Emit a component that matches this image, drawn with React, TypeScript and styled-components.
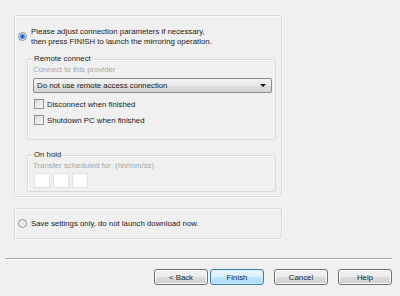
import styled, { createGlobalStyle } from "styled-components";

const GlobalStyle = createGlobalStyle`
  html, body {
    margin: 0;
    padding: 0;
    background: #f0f0f0;
  }
  body {
    font-family: "Liberation Sans", Arial, sans-serif;
    font-size: 7.8px;
    color: #1a1a1a;
  }
`;

const Page = styled.div`
  width: 400px;
  height: 296px;
  box-sizing: border-box;
  padding-top: 15px;
  display: flex;
  flex-direction: column;
  background: #f0f0f0;
`;

const Panel = styled.div<{ $height: number }>`
  margin-left: 14px;
  width: 268px;
  height: ${(p) => p.$height}px;
  box-sizing: border-box;
  border: 1px solid #d9d9d9;
  border-radius: 2px;
  box-shadow: inset 1px 1px 0 #fbfbfb, 1px 1px 0 #fbfbfb;
  display: flex;
  flex-direction: column;
`;

const MainPanel = styled(Panel)`
  padding: 11px 5px 0 3px;
`;

const SavePanel = styled(Panel)`
  margin-top: 11px;
  padding: 0 5px 0 3px;
  justify-content: center;
`;

const OptionRow = styled.div`
  display: flex;
  align-items: center;
  gap: 4px;
  line-height: 9.5px;
`;

const Radio = styled.span<{ $checked?: boolean }>`
  flex: none;
  width: 9px;
  height: 9px;
  box-sizing: border-box;
  border-radius: 50%;
  border: 1px solid #8e8f8f;
  background: ${(p) =>
    p.$checked
      ? "radial-gradient(circle, #1f4fa8 0, #3c7be0 1.8px, #9cc0ea 2.6px, #e6e6e6 3.2px)"
      : "radial-gradient(circle, #e6e6e6 0, #f4f4f4 3.5px)"};
`;

const GroupBox = styled.fieldset<{ $gap: number }>`
  margin: ${(p) => p.$gap}px 0 0 9px;
  width: 249px;
  box-sizing: border-box;
  padding: 0 3px 0 5px;
  border: 1px solid #dadada;
  border-radius: 2px;
  box-shadow: inset 1px 1px 0 #fbfbfb;
  min-inline-size: 0;
`;

const Legend = styled.legend`
  padding: 0 1px;
  margin-left: 0;
  line-height: 10px;
  color: #1a1a1a;
`;

const Hint = styled.div`
  color: #a6a6a6;
  line-height: 10px;
  margin-top: 1px;
`;

const Select = styled.div`
  margin-top: 3px;
  height: 15px;
  box-sizing: border-box;
  border: 1px solid #8c8c8c;
  border-radius: 2px;
  background: linear-gradient(#f3f3f3, #e8e8e8 50%, #dddddd 51%, #d5d5d5);
  display: flex;
  align-items: center;
  justify-content: space-between;
  padding: 0 5px 0 3px;
`;

const Arrow = styled.span`
  width: 0;
  height: 0;
  border-left: 3px solid transparent;
  border-right: 3px solid transparent;
  border-top: 3px solid #111;
`;

const CheckList = styled.div`
  display: flex;
  flex-direction: column;
  gap: 4px;
  margin: 5px 0 13px 1px;
`;

const CheckRow = styled.label`
  display: flex;
  align-items: center;
  gap: 3px;
  height: 12px;
`;

const Box = styled.span`
  width: 8px;
  height: 8px;
  border: 1px solid #8f8f8f;
  background: linear-gradient(135deg, #dcdcdc, #f8f8f8);
`;

const TimeRow = styled.div`
  display: flex;
  gap: 3px;
  margin: 2px 0 3px 1px;
`;

const TimeBox = styled.span`
  width: 16px;
  height: 15px;
  box-sizing: border-box;
  background: #fff;
  border: 1px solid #e2e2e2;
`;

const Separator = styled.div`
  margin: 19px 8px 0 5px;
  height: 1px;
  background: #a8a8a8;
  box-shadow: 0 1px 0 #fcfcfc;
`;

const ButtonBar = styled.div`
  display: flex;
  justify-content: flex-end;
  padding-right: 8px;
  margin-top: 10px;
`;

const Button = styled.button<{ $default?: boolean; $gap?: number }>`
  width: 54px;
  height: 16px;
  margin-left: ${(p) => p.$gap ?? 0}px;
  padding: 0;
  font-family: inherit;
  font-size: 7.8px;
  color: #1a1a1a;
  border-radius: 3px;
  border: 1px solid ${(p) => (p.$default ? "#3c7fb1" : "#707070")};
  background: ${(p) =>
    p.$default
      ? "linear-gradient(#eaf6fd, #d9f0fc 50%, #bee6fd 51%, #a7d9f5)"
      : "linear-gradient(#f2f2f2, #ebebeb 50%, #dddddd 51%, #cfcfcf)"};
  box-shadow: inset 0 0 0 1px ${(p) => (p.$default ? "#cfeafb" : "#fbfbfb")};
`;

export default function App() {
  return (
    <>
      <GlobalStyle />
      <Page>
        <MainPanel $height={182}>
          <OptionRow>
            <Radio $checked />
            <span>
              Please adjust connection parameters if necessary,
              <br />
              then press FINISH to launch the mirroring operation.
            </span>
          </OptionRow>
          <GroupBox $gap={8}>
            <Legend>Remote connect</Legend>
            <Hint>Connect to this provider</Hint>
            <Select>
              <span>Do not use remote access connection</span>
              <Arrow />
            </Select>
            <CheckList>
              <CheckRow>
                <Box />
                Disconnect when finished
              </CheckRow>
              <CheckRow>
                <Box />
                Shutdown PC when finished
              </CheckRow>
            </CheckList>
          </GroupBox>
          <GroupBox $gap={10}>
            <Legend>On hold</Legend>
            <Hint>Transfer scheduled for: (hh/mm/ss)</Hint>
            <TimeRow>
              <TimeBox />
              <TimeBox />
              <TimeBox />
            </TimeRow>
          </GroupBox>
        </MainPanel>
        <SavePanel $height={31}>
          <OptionRow>
            <Radio />
            <span>Save settings only, do not launch download now.</span>
          </OptionRow>
        </SavePanel>
        <Separator />
        <ButtonBar>
          <Button>&lt; Back</Button>
          <Button $default $gap={2}>
            Finish
          </Button>
          <Button $gap={10}>Cancel</Button>
          <Button $gap={10}>Help</Button>
        </ButtonBar>
      </Page>
    </>
  );
}
